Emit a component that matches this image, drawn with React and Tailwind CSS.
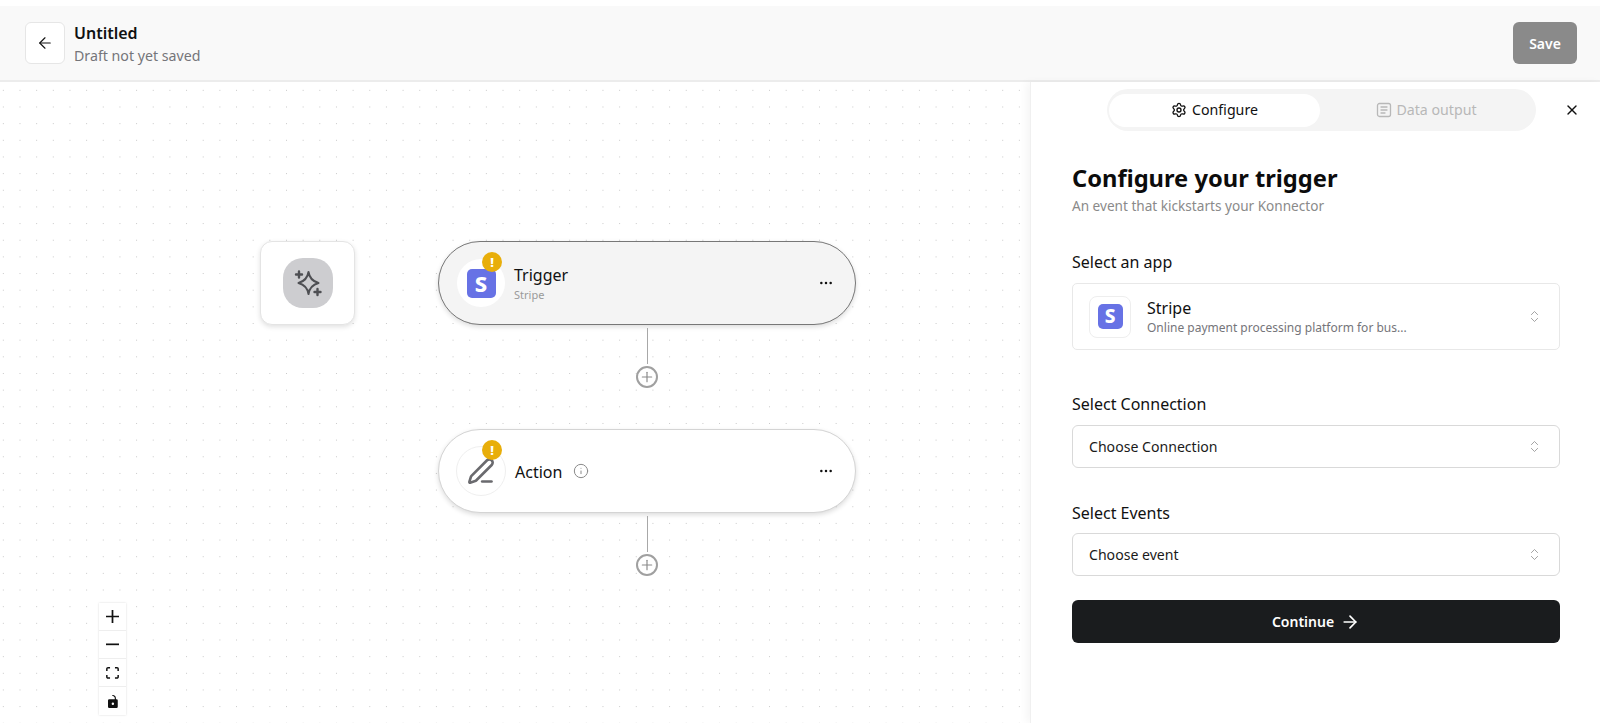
import React from "react";
import { ArrowLeft, ArrowRight, ChevronsUpDown, Ellipsis, Info, PenLine, Plus, Settings, X } from "lucide-react";

const StripeLogo = ({ size = "w-[29px] h-[29px] text-[22px] rounded-[5px]" }) => (
  <div className={`${size} bg-[#6772e5] text-white font-extrabold flex items-center justify-center leading-none`}>S</div>
);

const WarnBadge = () => (
  <div className="absolute -top-[7px] right-[3px] w-[20px] h-[20px] rounded-full bg-[#e8ae0a] text-white text-[13px] font-extrabold flex items-center justify-center leading-none">!</div>
);

const Connector = ({ top }) => (
  <div className="absolute left-[636px] w-[22px] flex flex-col items-center" style={{ top }}>
    <div className="w-px h-[36px] bg-[#a8a8a8]" />
    <div className="w-[22px] h-[22px] my-[2px] rounded-full border-2 border-[#a0a0a0] bg-white flex items-center justify-center text-[#8a8a8a]">
      <Plus size={16} strokeWidth={1.75} />
    </div>
  </div>
);

const ControlButton = ({ children, last }) => (
  <div className={`w-[27px] h-[28px] bg-white flex items-center justify-center ${last ? "" : "border-b border-[#eeeeee]"}`}>
    {children}
  </div>
);

const SelectBox = ({ label }) => (
  <div className="h-[43px] border border-[#d9d9d9] rounded-[6px] pl-[16px] pr-[17px] flex items-center justify-between text-[14.1px] text-[#1a1a1a]">
    <span className="pt-[1px]">{label}</span>
    <ChevronsUpDown size={15} strokeWidth={1.25} className="text-[#8a8a8a]" />
  </div>
);

export default function App() {
  return (
    <div className="h-screen w-full overflow-hidden bg-white pt-[6px] flex flex-col font-['Noto_Sans','Open_Sans',sans-serif]">
      {/* top bar */}
      <div className="h-[76px] shrink-0 bg-[#f9f9f9] border-b-2 border-[#ececec] pl-[25px] pr-[23px] flex items-center justify-between">
        <div className="flex items-center gap-[9px]">
          <div className="w-[40px] h-[42px] bg-white border border-[#e6e6e6] rounded-[6px] flex items-center justify-center">
            <ArrowLeft size={18} strokeWidth={1.5} className="text-[#111]" />
          </div>
          <div className="pt-[4px]">
            <p className="text-[16px] font-semibold leading-[21px] text-[#111]">Untitled</p>
            <p className="text-[14.2px] leading-[23px] text-[#75757a]">Draft not yet saved</p>
          </div>
        </div>
        <button className="w-[64px] h-[42px] bg-[#8a8a8a] rounded-[6px] text-white text-[14px] font-semibold">Save</button>
      </div>

      <div className="flex-1 flex min-h-0">
        {/* canvas */}
        <div className="relative w-[1030px] shrink-0 bg-[radial-gradient(circle,#c8c8c8_0.7px,transparent_0.8px)] bg-[size:16.67px_16.67px] bg-[position:-5px_0px]">
          <div className="absolute left-[260px] top-[159px] w-[95px] h-[84px] bg-white border border-[#e4e4e4] rounded-[12px] shadow-[0_2px_5px_rgba(0,0,0,0.12)] flex items-center justify-center">
            <div className="w-[50px] h-[50px] bg-[#cdcdd0] rounded-[20px] flex items-center justify-center">
              <svg width="30" height="30" viewBox="0 0 30 30" fill="none" stroke="#4e4f53" strokeWidth="2" strokeLinejoin="round" strokeLinecap="round">
                <path d="M15.500 4c.9 6 3.600 9.200 10 11-6.400 1.800-9.100 5-10 11-.9-6-3.600-9.200-10-11 6.400-1.800 9.100-5 10-11z" />
                <path d="M6 3.500v6M3 6.500h6M24.500 21v6M21.500 24h6" strokeWidth="2.400" />
              </svg>
            </div>
          </div>

          <div className="absolute left-[438px] top-[159px] w-[418px] h-[84px] bg-[#f4f4f4] border border-[#777777] rounded-full shadow-[0_2px_5px_rgba(0,0,0,0.14)] flex items-center pl-[18px] pr-[21px]">
            <div className="relative w-[48px] h-[48px] rounded-full bg-white flex items-center justify-center">
              <StripeLogo />
              <WarnBadge />
            </div>
            <div className="ml-[9px] flex-1 pt-[3px]">
              <p className="text-[16px] leading-[21px] text-[#111]">Trigger</p>
              <p className="text-[11px] leading-[18px] text-[#9a9a9a]">Stripe</p>
            </div>
            <Ellipsis size={16} strokeWidth={1.75} className="text-[#111]" />
          </div>

          <Connector top={246} />

          <div className="absolute left-[438px] top-[347px] w-[418px] h-[84px] bg-white border border-[#d4d4d4] rounded-full shadow-[0_2px_5px_rgba(0,0,0,0.14)] flex items-center pl-[17px] pr-[21px]">
            <div className="relative w-[50px] h-[50px] rounded-full bg-white border border-[#efefef] flex items-center justify-center">
              <PenLine size={28} strokeWidth={2.25} className="text-[#6a6a6e]" />
              <WarnBadge />
            </div>
            <span className="ml-[9px] pt-[2px] text-[16px] text-[#111]">Action</span>
            <Info size={16} strokeWidth={1.5} className="ml-[11px] text-[#8a8a8a]" />
            <Ellipsis size={16} strokeWidth={1.75} className="ml-auto text-[#111]" />
          </div>

          <Connector top={434} />

          {/* zoom controls */}
          <div className="absolute left-[99px] top-[521px] shadow-[0_0_2px_rgba(0,0,0,0.15)]">
            <ControlButton>
              <svg width="13" height="13" viewBox="0 0 32 32" fill="#111"><path d="M32 18.133H18.133V32h-4.266V18.133H0v-4.266h13.867V0h4.266v13.867H32z" /></svg>
            </ControlButton>
            <ControlButton>
              <svg width="13" height="3" viewBox="0 0 32 5" fill="#111"><path d="M0 0h32v4.200H0z" /></svg>
            </ControlButton>
            <ControlButton>
              <svg width="13" height="12" viewBox="0 0 32 30" fill="#111"><path d="M3.692 4.630c0-.530.400-.938.939-.938h5.215V0H4.708C2.130 0 0 2.054 0 4.630v5.216h3.692V4.631zM27.354 0h-5.200v3.692h5.170c.530 0 .984.400.984.939v5.215H32V4.631A4.624 4.624 0 0027.354 0zm.954 24.830c0 .532-.400.940-.939.940h-5.215v3.768h5.215c2.577 0 4.631-2.130 4.631-4.707v-5.139h-3.692v5.139zm-23.677.940c-.531 0-.939-.400-.939-.940v-5.138H0v5.139c0 2.577 2.130 4.707 4.708 4.707h5.138V25.770H4.631z" /></svg>
            </ControlButton>
            <ControlButton last>
              <svg width="10" height="13" viewBox="0 0 25 32" fill="#111"><path d="M21.333 10.667H19.810V7.619C19.810 3.429 16.380 0 12.190 0c-4.114 1.828-1.370 2.133.305 2.438 1.676.305 4.420 2.590 4.420 5.181v3.048H3.047A3.056 3.056 0 000 13.714v15.238A3.056 3.056 0 003.048 32h18.285a3.056 3.056 0 003.048-3.048V13.714a3.056 3.056 0 00-3.048-3.047zM12.190 24.533a3.056 3.056 0 01-3.047-3.047 3.056 3.056 0 013.047-3.048 3.056 3.056 0 013.048 3.048 3.056 3.056 0 01-3.048 3.047z" /></svg>
            </ControlButton>
          </div>
        </div>

        {/* config panel */}
        <div className="flex-1 bg-white border-l border-[#f0f0f0] shadow-[-4px_0_8px_rgba(0,0,0,0.04)] z-10">
          <div className="pt-[7px] pl-[76px] pr-[20px] flex items-center justify-between">
            <div className="w-[429px] h-[42px] bg-[#f4f4f4] rounded-full px-[2px] flex items-center">
              <div className="w-[211px] h-[33px] bg-white rounded-full flex items-center justify-center gap-[5px] text-[14.2px] text-[#111]">
                <Settings size={16} />
                <span>Configure</span>
              </div>
              <div className="flex-1 pr-[1px] flex items-center justify-center gap-[4px] text-[14.2px] text-[#b8b8b8]">
                <svg width="16" height="16" viewBox="0 0 16 16" fill="none" stroke="currentColor" strokeWidth="1.300" strokeLinecap="round">
                  <rect x="1.500" y="1.500" width="13" height="13" rx="2" />
                  <path d="M5 5h6M5 8h6M5 11h4" />
                </svg>
                <span>Data output</span>
              </div>
            </div>
            <X size={16} className="text-[#111]" />
          </div>

          <div className="pl-[41px] pr-[40px] pt-[29px]">
            <h1 className="text-[23.7px] font-bold leading-[36px] text-[#0c0c0c]">Configure your trigger</h1>
            <p className="text-[13.6px] leading-[20px] text-[#8a8a8a]">An event that kickstarts your Konnector</p>

            <p className="mt-[35px] text-[16px] leading-[22px] text-[#111]">Select an app</p>
            <div className="mt-[10px] h-[67px] border border-[#e8e8e8] rounded-[5px] pl-[16px] pr-[17px] flex items-center">
              <div className="w-[42px] h-[42px] border border-[#eeeeee] rounded-[8px] flex items-center justify-center">
                <StripeLogo size="w-[25px] h-[25px] text-[19px] rounded-[5px]" />
              </div>
              <div className="ml-[16px] flex-1">
                <p className="text-[16px] leading-[22px] text-[#111]">Stripe</p>
                <p className="text-[12px] leading-[18px] text-[#75757a]">Online payment processing platform for bus...</p>
              </div>
              <ChevronsUpDown size={15} strokeWidth={1.25} className="text-[#8a8a8a]" />
            </div>

            <p className="mt-[43px] text-[16px] leading-[22px] text-[#111]">Select Connection</p>
            <div className="mt-[10px]"><SelectBox label="Choose Connection" /></div>

            <p className="mt-[34px] text-[16px] leading-[22px] text-[#111]">Select Events</p>
            <div className="mt-[9px]"><SelectBox label="Choose event" /></div>

            <button className="mt-[24px] w-full h-[43px] bg-[#1a1c1e] rounded-[6px] text-white text-[14px] font-semibold flex items-center justify-center gap-[6px]">
              Continue <ArrowRight size={20} />
            </button>
          </div>
        </div>
      </div>
    </div>
  );
}
